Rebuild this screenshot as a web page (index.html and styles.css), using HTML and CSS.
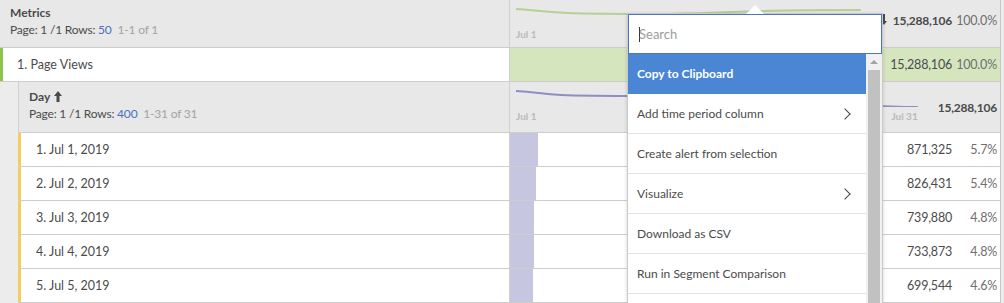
FILE: index.html
```html
<!DOCTYPE html>
<html lang="en">
<head>
    <meta charset="UTF-8">
    <title>Freeform Table</title>
    <link rel="stylesheet" href="styles.css">
</head>
<body>

    <div class="report">
        <div class="row head">
            <div class="cell label">
                <div class="title">Metrics</div>
                <div class="pager">Page: 1 /1 Rows: <span class="link">50</span> <span class="muted">1-1 of 1</span></div>
            </div>
            <div class="cell data">
                <div class="spark">
                    <svg viewBox="0 0 400 20" preserveAspectRatio="none">
                        <path d="M0 4 C20 5 30 7 60 8 S120 9 160 9 S220 8 250 7 S320 5 400 5" stroke="#b3d196" stroke-width="2" fill="none"/>
                    </svg>
                    <div class="axis"><span>Jul 1</span></div>
                </div>
                <div class="totals top">
                    <svg class="arrow" width="6" height="11" viewBox="0 0 6 11"><path d="M2 0h2v7h2l-3 4-3-4h2z" fill="#4b4b4b"/></svg>
                    <b>15,288,106</b><span class="pct">100.0%</span>
                </div>
            </div>
        </div>

        <div class="row metric">
            <div class="cell label">1. Page Views</div>
            <div class="cell data">
                <div class="bar green" style="width: 100%"></div>
                <div class="totals"><span>15,288,106</span><span class="pct">100.0%</span></div>
            </div>
        </div>

        <div class="nested">
            <div class="row head">
                <div class="cell label">
                    <div class="title">Day <svg width="8" height="11" viewBox="0 0 8 11"><path d="M2.5 11V5H0l4-5 4 5H5.5v6z" fill="#4b4b4b"/></svg></div>
                    <div class="pager">Page: 1 /1 Rows: <span class="link">400</span> <span class="muted">1-31 of 31</span></div>
                </div>
                <div class="cell data">
                    <div class="spark">
                        <svg viewBox="0 0 400 20" preserveAspectRatio="none">
                            <path d="M0 4 C20 5 25 7 45 8 S90 9 130 9 S250 14 300 16 S360 20 400 20" stroke="#8e8ec2" stroke-width="2" fill="none"/>
                        </svg>
                        <div class="axis"><span>Jul 1</span><span>Jul 31</span></div>
                    </div>
                    <div class="totals"><b>15,288,106</b></div>
                </div>
            </div>

            <div class="row day">
                <div class="cell label">1. Jul 1, 2019</div>
                <div class="cell data">
                    <div class="bar" style="width: 5.7%"></div>
                    <div class="totals"><span>871,325</span><span class="pct">5.7%</span></div>
                </div>
            </div>
            <div class="row day">
                <div class="cell label">2. Jul 2, 2019</div>
                <div class="cell data">
                    <div class="bar" style="width: 5.4%"></div>
                    <div class="totals"><span>826,431</span><span class="pct">5.4%</span></div>
                </div>
            </div>
            <div class="row day">
                <div class="cell label">3. Jul 3, 2019</div>
                <div class="cell data">
                    <div class="bar" style="width: 4.8%"></div>
                    <div class="totals"><span>739,880</span><span class="pct">4.8%</span></div>
                </div>
            </div>
            <div class="row day">
                <div class="cell label">4. Jul 4, 2019</div>
                <div class="cell data">
                    <div class="bar" style="width: 4.8%"></div>
                    <div class="totals"><span>733,873</span><span class="pct">4.8%</span></div>
                </div>
            </div>
            <div class="row day">
                <div class="cell label">5. Jul 5, 2019</div>
                <div class="cell data">
                    <div class="bar" style="width: 4.6%"></div>
                    <div class="totals"><span>699,544</span><span class="pct">4.6%</span></div>
                </div>
            </div>
        </div>

        <div class="menu">
            <div class="search"><span class="caret"></span>Search</div>
            <div class="menu-body">
                <ul class="options">
                    <li class="active">Copy to Clipboard</li>
                    <li>Add time period column <span class="chev"></span></li>
                    <li>Create alert from selection</li>
                    <li>Visualize <span class="chev"></span></li>
                    <li>Download as CSV</li>
                    <li>Run in Segment Comparison</li>
                    <li></li>
                </ul>
                <div class="scroll">
                    <span class="up"></span>
                    <span class="thumb"></span>
                </div>
            </div>
        </div>
    </div>

</body>
</html>
```

FILE: styles.css
```css
body {
    margin: 0;
    font-family: Lato, "Open Sans", sans-serif;
    font-size: 12.5px;
    color: #4b4b4b;
    background-color: #ececec;
}
.report {
    position: relative;
    width: 1000px;
    height: 303px;
    overflow: hidden;
    border-right: 1px solid #c8c8c8;
}
.row {
    display: grid;
    grid-template-columns: 510px 1fr;
    border-bottom: 1px solid #cdcdcd;
    box-sizing: border-box;
}
.cell {
    box-sizing: border-box;
}
.label {
    border-right: 1px solid #d0d0d0;
}
.head {
    height: 48px;
    background-color: #e8e8e8;
}
.head .label {
    padding: 4px 10px;
}
.title {
    font-weight: bold;
    font-size: 12px;
    line-height: 17px;
}
.title svg {
    vertical-align: -1px;
    margin-left: 1px;
}
.pager {
    font-size: 12px;
    line-height: 18px;
    letter-spacing: -0.2px;
}
.link {
    color: #4a6fc0;
}
.muted {
    color: #a3a3a3;
    margin-left: 3px;
}
.data {
    position: relative;
    display: flex;
}
.spark {
    flex: 1;
    padding: 5px 0 0 6px;
}
.spark svg {
    display: block;
    width: 100%;
    height: 20px;
}
.axis {
    display: flex;
    justify-content: space-between;
    font-size: 10px;
    font-weight: bold;
    color: #b9b9b9;
    margin-top: 3px;
}
.totals {
    position: relative;
    display: flex;
    align-items: center;
    padding-left: 20px;
    letter-spacing: -0.2px;
}
.totals.top {
    align-items: flex-start;
    padding-top: 13px;
}
.arrow {
    margin: 1px 6px 0 0;
}
.pct {
    width: 48px;
    padding: 0 3px 0 4px;
    text-align: right;
    color: #6e6e6e;
    box-sizing: border-box;
    font-size: 12.5px;
    white-space: nowrap;
}
.head .totals b {
    font-size: 12px;
}
.nested .head .totals {
    padding-right: 3px;
}
.metric {
    height: 34px;
}
.metric .label {
    background-color: white;
    border-left: 3px solid #8cc34a;
    padding: 0 14px;
    display: flex;
    align-items: center;
}
.metric .data,
.day .data {
    justify-content: flex-end;
    background-color: white;
}
.bar {
    position: absolute;
    left: 0;
    top: 0;
    bottom: 0;
    background-color: #c6c6e1;
}
.bar.green {
    background-color: #d5e6bf;
}
.nested {
    margin-left: 18px;
    border-left: 1px solid #d0d0d0;
}
.nested .row {
    grid-template-columns: 491px 1fr;
}
.nested .head {
    height: 51px;
}
.nested .head .label {
    padding: 6px 10px;
}
.day {
    height: 34px;
}
.day .label {
    background-color: white;
    border-left: 3px solid #f2cf5a;
    margin-left: -1px;
    padding: 0 15px;
    display: flex;
    align-items: center;
}
.menu {
    position: absolute;
    left: 627px;
    top: 13px;
    width: 256px;
    height: 300px;
    background-color: white;
    border: 1px solid #c9c9c9;
    box-sizing: border-box;
    box-shadow: 0 1px 4px rgba(0, 0, 0, 0.15);
}
.menu::before {
    content: "";
    position: absolute;
    left: 118px;
    top: -9px;
    border: 9px solid transparent;
    border-top: none;
    border-bottom-color: white;
}
.search {
    height: 40px;
    border: 1px solid #4c76c2;
    box-sizing: border-box;
    display: flex;
    align-items: center;
    padding-left: 10px;
    color: #9d9d9d;
    font-size: 13px;
}
.caret {
    width: 1px;
    height: 15px;
    background-color: #333;
    margin-right: -1px;
}
.menu-body {
    display: flex;
}
.options {
    list-style: none;
    margin: 0;
    padding: 0;
    flex: 1;
}
.options li {
    height: 40px;
    box-sizing: border-box;
    border-bottom: 1px solid #e3e3e3;
    display: flex;
    align-items: center;
    justify-content: space-between;
    padding: 0 14px 0 9px;
    font-size: 12px;
}
.options li.active {
    background-color: #4a86d4;
    color: white;
    font-weight: bold;
    border-bottom-color: #4a86d4;
}
.chev {
    width: 7px;
    height: 7px;
    border-top: 1.5px solid #444;
    border-right: 1.5px solid #444;
    transform: rotate(45deg);
    margin-right: 3px;
}
.scroll {
    width: 16px;
    background-color: #f1f1f1;
    display: flex;
    flex-direction: column;
    align-items: center;
}
.up {
    margin-top: 6px;
    border: 4px solid transparent;
    border-top: none;
    border-bottom: 4px solid #a3a3a3;
}
.thumb {
    width: 12px;
    height: 240px;
    margin-top: 6px;
    background-color: #c1c1c1;
}
```
